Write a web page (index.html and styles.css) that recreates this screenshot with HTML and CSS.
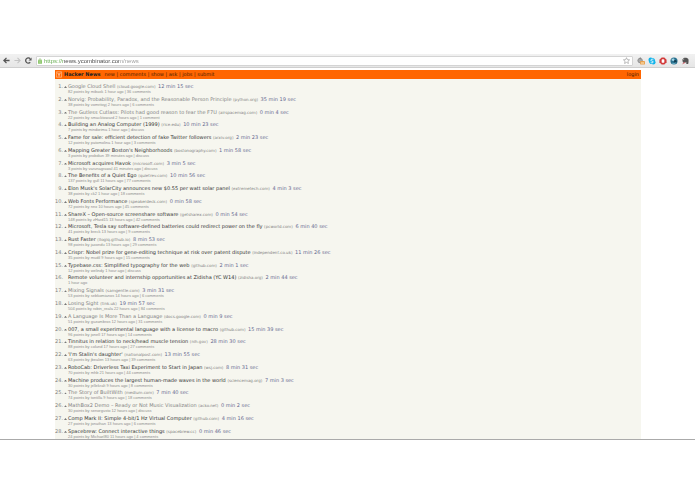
FILE: index.html
```
<!DOCTYPE html>
<html lang="en">
<head>
  <meta charset="utf-8">
  <title>Hacker News</title>
  <link rel="stylesheet" href="styles.css">
</head>
<body>
  <div class="toolbar">
    <button class="tool" aria-label="Back"><svg viewBox="0 0 16 16"><path d="M8 2 2 8l6 6M3 8h12" fill="none" stroke="#555" stroke-width="3"/></svg></button>
    <button class="tool" aria-label="Forward"><svg viewBox="0 0 16 16"><path d="M8 2l6 6-6 6M13 8H1" fill="none" stroke="#c4c4c4" stroke-width="2.5"/></svg></button>
    <button class="tool" aria-label="Reload"><svg viewBox="0 0 16 16"><path d="M12 12A6 6 0 1 1 12 4" fill="none" stroke="#555" stroke-width="3"/><path d="M15 1v7H8z" fill="#555"/></svg></button>
    <div class="address">
      <svg class="lock" viewBox="0 0 10 14"><path d="M2.5 7V4a2.5 2.5 0 0 1 5 0v3" fill="none" stroke="#8cbd6c" stroke-width="2"/><rect x="0" y="5" width="10" height="9" rx="1" fill="#8cc66a"/><path d="M2 8h6M2 11h6" stroke="#c5e3b2"/></svg>
      <input type="text" value="https://news.ycombinator.com/news" aria-label="Address">
      <svg class="star" viewBox="0 0 16 16"><path d="m8 1.500 2 4.500 5 .5-3.700 3.300 1 5L8 12.300l-4.300 2.500 1-5L1 6.500 6 6z" fill="#fff" stroke="#999" stroke-width="1.500"/></svg>
    </div>
    <div class="extensions">
      <button class="tool" aria-label="Timer"><svg viewBox="0 0 18 18"><circle cx="7" cy="8" r="5" fill="#aaa" stroke="#888" stroke-width="2"/><path d="M6 1h3v4H6z" fill="#888"/><rect x="7" y="9" width="11" height="8" rx="1" fill="#e9a04c"/><path d="M9 12h7v3H9z" fill="#f8d9a8"/></svg></button>
      <button class="tool" aria-label="Skype"><svg viewBox="0 0 18 18"><circle cx="6" cy="6" r="5" fill="#13b3ea"/><circle cx="12" cy="12" r="5" fill="#13b3ea"/><circle cx="9" cy="9" r="7" fill="#13b3ea"/><path d="M12 6C10 4 6 5 6.500 7.500S12 9 12 11s-4 3-6 1" fill="none" stroke="#fff" stroke-width="2"/></svg></button>
      <button class="tool" aria-label="Block"><svg viewBox="0 0 18 18"><path d="M6 1h6l5 5v6l-5 5H6l-5-5V6z" fill="#d23a3a"/><rect x="6" y="5" width="6" height="8" rx="2" fill="#fff"/></svg></button>
      <button class="tool" aria-label="Globe"><svg viewBox="0 0 18 18"><circle cx="9" cy="9" r="8" fill="#28708e"/><path d="M3 7c3-5 7-4 7-1s-5 4-7 1z" fill="#a6d4e3"/><circle cx="12" cy="10" r="3" fill="#123d52"/><path d="M5 14c3 1 6 1 8-1" fill="none" stroke="#77b8cf" stroke-width="2"/></svg></button>
      <button class="tool" aria-label="Evernote"><svg viewBox="0 0 18 18"><path d="M6 2c5-1 10 0 11 4 0 4 0 7-1 10h-4v-4c-3 2-7 1-8-1L3 6z" fill="#555"/><path d="M3 7 7 2v5z" fill="#999"/><path d="m2 17 5-6 3 2z" fill="#d05a64"/></svg></button>
    </div>
  </div>

  <div class="page">
    <header class="topbar">
      <svg class="logo" viewBox="0 0 18 18"><path d="M1 1h16v16H1z" fill="#ff6600" stroke="#ffc9a0" stroke-width="2"/><path d="m5 4 4 6 4-6M9 10v5" fill="none" stroke="#fff" stroke-width="2"/></svg>
      <a class="brand" href="#">Hacker News</a>
      <nav><a href="#">new</a> | <a href="#">comments</a> | <a href="#">show</a> | <a href="#">ask</a> | <a href="#">jobs</a> | <a href="#">submit</a></nav>
      <a class="login" href="#">login</a>
    </header>

    <ol class="stories">
      <li class="visited"><span class="rank">1.</span><i class="vote"></i><div><a href="#">Google Cloud Shell</a> <span class="site">(cloud.google.com)</span> <span class="time">12 min 15 sec</span><p>82 points by mibask 1 hour ago | 36 comments</p></div></li>
      <li class="visited"><span class="rank">2.</span><i class="vote"></i><div><a href="#">Norvig: Probability, Paradox, and the Reasonable Person Principle</a> <span class="site">(python.org)</span> <span class="time">35 min 19 sec</span><p>38 points by vomritoyj 2 hours ago | 6 comments</p></div></li>
      <li class="visited"><span class="rank">3.</span><i class="vote"></i><div><a href="#">The Gutless Cutlass: Pilots had good reason to fear the F7U</a> <span class="site">(airspacemag.com)</span> <span class="time">0 min 4 sec</span><p>22 points by smacktoward 2 hours ago | 1 comment</p></div></li>
      <li><span class="rank">4.</span><i class="vote"></i><div><a href="#">Building an Analog Computer (1999)</a> <span class="site">(rice.edu)</span> <span class="time">10 min 23 sec</span><p>7 points by mindorima 1 hour ago | discuss</p></div></li>
      <li><span class="rank">5.</span><i class="vote"></i><div><a href="#">Fame for sale: efficient detection of fake Twitter followers</a> <span class="site">(arxiv.org)</span> <span class="time">2 min 23 sec</span><p>12 points by patomolina 1 hour ago | 3 comments</p></div></li>
      <li><span class="rank">6.</span><i class="vote"></i><div><a href="#">Mapping Greater Boston's Neighborhoods</a> <span class="site">(bostonography.com)</span> <span class="time">1 min 58 sec</span><p>3 points by probdiun 39 minutes ago | discuss</p></div></li>
      <li><span class="rank">7.</span><i class="vote"></i><div><a href="#">Microsoft acquires Havok</a> <span class="site">(microsoft.com)</span> <span class="time">3 min 5 sec</span><p>3 points by varunagrawal 41 minutes ago | discuss</p></div></li>
      <li><span class="rank">8.</span><i class="vote"></i><div><a href="#">The Benefits of a Quiet Ego</a> <span class="site">(quietrev.com)</span> <span class="time">10 min 56 sec</span><p>137 points by gull 11 hours ago | 77 comments</p></div></li>
      <li><span class="rank">9.</span><i class="vote"></i><div><a href="#">Elon Musk's SolarCity announces new $0.55 per watt solar panel</a> <span class="site">(extremetech.com)</span> <span class="time">4 min 3 sec</span><p>38 points by ck2 1 hour ago | 18 comments</p></div></li>
      <li><span class="rank">10.</span><i class="vote"></i><div><a href="#">Web Fonts Performance</a> <span class="site">(speakerdeck.com)</span> <span class="time">0 min 58 sec</span><p>72 points by nnx 10 hours ago | 45 comments</p></div></li>
      <li><span class="rank">11.</span><i class="vote"></i><div><a href="#">ShareX – Open-source screenshare software</a> <span class="site">(getsharex.com)</span> <span class="time">0 min 54 sec</span><p>148 points by zHard15 13 hours ago | 42 comments</p></div></li>
      <li><span class="rank">12.</span><i class="vote"></i><div><a href="#">Microsoft, Tesla say software-defined batteries could redirect power on the fly</a> <span class="site">(pcworld.com)</span> <span class="time">6 min 40 sec</span><p>41 points by breck 13 hours ago | 9 comments</p></div></li>
      <li><span class="rank">13.</span><i class="vote"></i><div><a href="#">Rust Faster</a> <span class="site">(llogiq.github.io)</span> <span class="time">8 min 53 sec</span><p>98 points by jaxondu 13 hours ago | 29 comments</p></div></li>
      <li><span class="rank">14.</span><i class="vote"></i><div><a href="#">Crispr: Nobel prize for gene-editing technique at risk over patent dispute</a> <span class="site">(independent.co.uk)</span> <span class="time">11 min 26 sec</span><p>35 points by mudil 9 hours ago | 15 comments</p></div></li>
      <li><span class="rank">15.</span><i class="vote"></i><div><a href="#">Typebase.css: Simplified typography for the web</a> <span class="site">(github.com)</span> <span class="time">2 min 1 sec</span><p>12 points by welindy 1 hour ago | discuss</p></div></li>
      <li class="job"><span class="rank">16.</span><i class="vote"></i><div><a href="#">Remote volunteer and internship opportunities at Zidisha (YC W14)</a> <span class="site">(zidisha.org)</span> <span class="time">2 min 44 sec</span><p>1 hour ago</p></div></li>
      <li class="visited"><span class="rank">17.</span><i class="vote"></i><div><a href="#">Mixing Signals</a> <span class="site">(samgentle.com)</span> <span class="time">3 min 31 sec</span><p>53 points by sebkomianos 14 hours ago | 6 comments</p></div></li>
      <li class="visited"><span class="rank">18.</span><i class="vote"></i><div><a href="#">Losing Sight</a> <span class="site">(tink.uk)</span> <span class="time">19 min 57 sec</span><p>504 points by robin_reala 22 hours ago | 84 comments</p></div></li>
      <li class="visited"><span class="rank">19.</span><i class="vote"></i><div><a href="#">A Language Is More Than a Language</a> <span class="site">(docs.google.com)</span> <span class="time">0 min 9 sec</span><p>51 points by guzambros 12 hours ago | 31 comments</p></div></li>
      <li><span class="rank">20.</span><i class="vote"></i><div><a href="#">007, a small experimental language with a license to macro</a> <span class="site">(github.com)</span> <span class="time">15 min 39 sec</span><p>96 points by jonell 17 hours ago | 14 comments</p></div></li>
      <li><span class="rank">21.</span><i class="vote"></i><div><a href="#">Tinnitus in relation to neck/head muscle tension</a> <span class="site">(nih.gov)</span> <span class="time">28 min 30 sec</span><p>88 points by colund 17 hours ago | 27 comments</p></div></li>
      <li><span class="rank">22.</span><i class="vote"></i><div><a href="#">'I'm Stalin's daughter'</a> <span class="site">(nationalpost.com)</span> <span class="time">13 min 55 sec</span><p>63 points by jbealen 13 hours ago | 39 comments</p></div></li>
      <li><span class="rank">23.</span><i class="vote"></i><div><a href="#">RoboCab: Driverless Taxi Experiment to Start in Japan</a> <span class="site">(wsj.com)</span> <span class="time">8 min 31 sec</span><p>70 points by mhb 21 hours ago | 44 comments</p></div></li>
      <li><span class="rank">24.</span><i class="vote"></i><div><a href="#">Machine produces the largest human-made waves in the world</a> <span class="site">(sciencemag.org)</span> <span class="time">7 min 3 sec</span><p>30 points by jellekralt 9 hours ago | 8 comments</p></div></li>
      <li class="visited"><span class="rank">25.</span><i class="vote"></i><div><a href="#">The Story of BuiltWith</a> <span class="site">(medium.com)</span> <span class="time">7 min 40 sec</span><p>74 points by tontilla 9 hours ago | 18 comments</p></div></li>
      <li class="visited"><span class="rank">26.</span><i class="vote"></i><div><a href="#">MathBox2 Demo – Ready or Not Music Visualization</a> <span class="site">(acko.net)</span> <span class="time">0 min 2 sec</span><p>30 points by senorgusto 12 hours ago | discuss</p></div></li>
      <li><span class="rank">27.</span><i class="vote"></i><div><a href="#">Comp Mark II: Simple 4-bit/1 Hz Virtual Computer</a> <span class="site">(github.com)</span> <span class="time">4 min 16 sec</span><p>27 points by jonathan 13 hours ago | 6 comments</p></div></li>
      <li><span class="rank">28.</span><i class="vote"></i><div><a href="#">Spacebrew: Connect interactive things</a> <span class="site">(spacebrew.cc)</span> <span class="time">0 min 46 sec</span><p>24 points by Michael80 11 hours ago | 4 comments</p></div></li>
    </ol>
  </div>
</body>
</html>
```
FILE: styles.css
```
* {
  box-sizing: border-box;
}
body {
  margin: 0;
  padding: 54px 0;
  min-height: 100vh;
  display: flex;
  flex-direction: column;
  background: #fff;
  font: 5px/7px "DejaVu Sans", Verdana, sans-serif;
  color: #828282;
}
a {
  color: inherit;
  text-decoration: none;
}

/* browser toolbar */
.toolbar {
  display: flex;
  align-items: center;
  gap: 4px;
  height: 14px;
  padding: 0 6px 0 3px;
  background: linear-gradient(#f1f1f1, #e6e6e6);
  border-bottom: 1px solid #cfcfcf;
}
.tool {
  display: block;
  width: 7px;
  height: 7px;
  padding: 0;
  border: none;
  background: none;
}
.tool svg {
  display: block;
  width: 100%;
  height: 100%;
}
.address {
  display: flex;
  flex: 1;
  align-items: center;
  gap: 2px;
  height: 10px;
  padding: 0 2px 0 1px;
  background: #fff;
  border: 1px solid #d4d4d4;
  border-radius: 1px;
}
.address input {
  flex: 1;
  min-width: 0;
  height: 8px;
  padding: 0;
  border: none;
  outline: none;
  font: 6px/8px "Liberation Sans", Arial, sans-serif;
  color: transparent;
  background: linear-gradient(90deg, #5faa49 19px, #444 19px, #444 76px, #999 76px);
  -webkit-background-clip: text;
  background-clip: text;
}
.lock {
  width: 4px;
  height: 6px;
}
.star {
  width: 7px;
  height: 7px;
}
.extensions {
  display: flex;
  gap: 3px;
}
.extensions .tool {
  width: 8px;
  height: 8px;
}

/* news page */
.page {
  display: flex;
  flex: 1;
  flex-direction: column;
  padding: 2px 54px 0 55px;
  border-bottom: 1px solid #aaa;
}
.topbar {
  display: flex;
  align-items: center;
  height: 9px;
  padding: 0 2px 0 1px;
  background: #ff6600;
  color: #4a2000;
}
.logo {
  width: 6px;
  height: 7px;
  margin-right: 2px;
}
.brand {
  margin-right: 4px;
  font-weight: bold;
  color: #222;
}
.login {
  margin-left: auto;
}
.stories {
  display: flex;
  flex: 1;
  flex-direction: column;
  justify-content: space-between;
  margin: 0;
  padding: 4px 0 0;
  list-style: none;
  background: #f6f6ef;
}
.stories li {
  display: flex;
}
.rank {
  width: 8px;
  text-align: right;
}
.vote {
  width: 3px;
  height: 2px;
  margin: 3px 1px 0;
  background: #777;
  clip-path: polygon(50% 0, 100% 100%, 0 100%);
}
.job .vote {
  visibility: hidden;
}
.stories a {
  color: #333;
}
.stories .visited a {
  color: #828282;
}
.site {
  font-size: 4px;
}
.time {
  margin-left: 1px;
  color: #666a90;
}
.stories p {
  margin: 0;
  font: 4px/4px "Liberation Sans", Arial, sans-serif;
  color: #8e8e8e;
}
```
